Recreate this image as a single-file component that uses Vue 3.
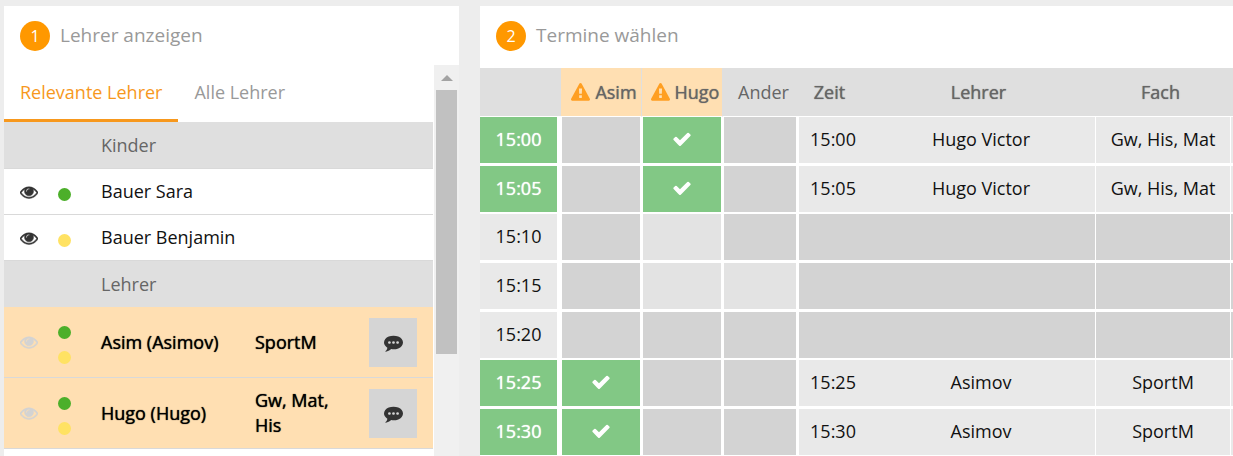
<script setup>
import { ref } from 'vue'

const icons = {
  eye: 'M1664 960q-152-236-381-353 61 104 61 225 0 185-131.5 316.5t-316.5 131.5-316.5-131.5-131.5-316.5q0-121 61-225-229 117-381 353 133 205 333.5 326.5t434.5 121.5 434.5-121.5 333.5-326.5zm-720-384q0-20-14-34t-34-14q-125 0-214.5 89.5t-89.5 214.5q0 20 14 34t34 14 34-14 14-34q0-86 61-147t147-61q20 0 34-14t14-34zm848 384q0 34-20 69-140 230-376.500 368.500t-499.500 138.500-499.500-139-376.500-368q-20-35-20-69t20-69q140-229 376.500-368t499.500-139 499.500 139 376.500 368q20 35 20 69z',
  check: 'M1671 566q0 40-28 68l-724 724-136 136q-28 28-68 28t-68-28l-136-136-362-362q-28-28-28-68t28-68l136-136q28-28 68-28t68 28l294 295 656-657q28-28 68-28t68 28l136 136q28 28 28 68z',
  warning: 'M1024 1375v-190q0-14-9.500-23.500t-22.500-9.500h-192q-13 0-22.500 9.500t-9.500 23.500v190q0 14 9.500 23.500t22.500 9.500h192q13 0 22.500-9.500t9.500-23.500zm-2-374l18-459q0-12-10-19-13-11-24-11h-220q-11 0-24 11-10 7-10 21l17 457q0 10 10 16.500t24 6.500h185q14 0 23.500-6.500t10.500-16.500zm-14-934l768 1408q35 63-2 126-17 29-46.500 46t-63.500 17h-1536q-34 0-63.500-17t-46.500-46q-37-63-2-126l768-1408q17-31 47-49t65-18 65 18 47 49z',
  comment: 'M640 896q0-53-37.500-90.500t-90.500-37.500-90.500 37.500-37.500 90.500 37.500 90.500 90.500 37.500 90.500-37.500 37.500-90.500zm384 0q0-53-37.500-90.500t-90.500-37.500-90.500 37.500-37.500 90.500 37.500 90.500 90.500 37.500 90.500-37.500 37.500-90.500zm384 0q0-53-37.500-90.500t-90.500-37.500-90.500 37.500-37.500 90.500 37.500 90.500 90.500 37.500 90.500-37.500 37.500-90.500zm384 0q0 174-120 321.500t-326 233-450 85.500q-110 0-211-18-173 173-435 229-52 10-86 13-12 1-22-6t-13-18q-4-15 20-37 5-5 23.500-21.500t25.500-23.500 23.500-25.500 24-31.500 20.500-37 20-48 14.500-57.500 12.500-72.500q-146-90-229.500-216.500t-83.500-269.500q0-174 120-321.500t326-233 450-85.500 450 85.500 326 233 120 321.500z'
}

const tabs = ['Relevante Lehrer', 'Alle Lehrer']
const activeTab = ref(0)

const children = [
  { name: 'Bauer Sara', color: 'green' },
  { name: 'Bauer Benjamin', color: 'yellow' }
]
const teachers = [
  { name: 'Asim (Asimov)', subjects: 'SportM' },
  { name: 'Hugo (Hugo)', subjects: 'Gw, Mat, His' }
]

// slots: one state per teacher column
const rows = [
  { time: '15:00', slots: ['busy', 'booked', 'busy'], teacher: 'Hugo Victor', subject: 'Gw, His, Mat' },
  { time: '15:05', slots: ['busy', 'booked', 'busy'], teacher: 'Hugo Victor', subject: 'Gw, His, Mat' },
  { time: '15:10', slots: ['busy', 'free', 'busy'] },
  { time: '15:15', slots: ['busy', 'free', 'free'] },
  { time: '15:20', slots: ['busy', 'busy', 'busy'] },
  { time: '15:25', slots: ['booked', 'busy', 'busy'], teacher: 'Asimov', subject: 'SportM' },
  { time: '15:30', slots: ['booked', 'busy', 'busy'], teacher: 'Asimov', subject: 'SportM' }
]
</script>

<template>
  <main class="page">
    <section class="panel teachers">
      <header class="panel-head">
        <span class="step">1</span>
        <h2>Lehrer anzeigen</h2>
      </header>
      <div class="scroller">
        <div class="list">
          <nav class="tabs">
            <button
              v-for="(tab, i) in tabs"
              :key="tab"
              type="button"
              class="tab"
              :class="{ active: i === activeTab }"
              @click="activeTab = i"
            >{{ tab }}</button>
          </nav>
          <h3 class="group lined-group">Kinder</h3>
          <div v-for="child in children" :key="child.name" class="row">
            <button type="button" class="eye" aria-label="Anzeigen">
              <svg viewBox="0 0 1792 1792"><path :d="icons.eye" /></svg>
            </button>
            <span class="dots child-dot"><i class="dot" :class="child.color"></i></span>
            <span class="name">{{ child.name }}</span>
          </div>
          <h3 class="group">Lehrer</h3>
          <div v-for="t in teachers" :key="t.name" class="row teacher">
            <button type="button" class="eye" aria-label="Anzeigen">
              <svg viewBox="0 0 1792 1792"><path :d="icons.eye" /></svg>
            </button>
            <span class="dots"><i class="dot green"></i><i class="dot yellow"></i></span>
            <span class="name">{{ t.name }}</span>
            <span class="subjects">{{ t.subjects }}</span>
            <button type="button" class="comment" aria-label="Kommentar">
              <svg viewBox="0 0 1792 1792"><path :d="icons.comment" /></svg>
            </button>
          </div>
        </div>
        <div class="scrollbar">
          <svg class="arrow" viewBox="0 0 12 6"><path d="M0 6L6 0L12 6Z" /></svg>
          <div class="thumb"></div>
        </div>
      </div>
    </section>

    <section class="panel dates">
      <header class="panel-head">
        <span class="step">2</span>
        <h2>Termine wählen</h2>
      </header>
      <table>
        <colgroup>
          <col class="c-slot"><col class="c-slot"><col class="c-slot"><col class="c-last">
          <col class="c-time"><col><col class="c-subject"><col class="c-more">
        </colgroup>
        <thead>
          <tr>
            <th></th>
            <th v-for="n in ['Asim', 'Hugo']" :key="n" class="warn">
              <svg viewBox="0 0 1792 1792"><path :d="icons.warning" /></svg><span>{{ n }}</span>
            </th>
            <th class="plain">Ander</th>
            <th class="info-head">Zeit</th>
            <th class="info-head">Lehrer</th>
            <th class="info-head">Fach</th>
            <th></th>
          </tr>
        </thead>
        <tbody>
          <tr v-for="r in rows" :key="r.time">
            <td class="time" :class="{ booked: r.teacher }">{{ r.time }}</td>
            <td v-for="(s, i) in r.slots" :key="i" class="slot" :class="s">
              <svg v-if="s === 'booked'" viewBox="0 0 1792 1792"><path :d="icons.check" /></svg>
            </td>
            <td class="info first" :class="{ busy: !r.teacher }">{{ r.teacher ? r.time : '' }}</td>
            <td class="info lined" :class="{ busy: !r.teacher }">{{ r.teacher }}</td>
            <td class="info lined" :class="{ busy: !r.teacher }">{{ r.subject }}</td>
            <td class="info" :class="{ busy: !r.teacher }"></td>
          </tr>
        </tbody>
      </table>
    </section>
  </main>
</template>

<style>
body {
  background: #ededed;
}
</style>

<style scoped>
.page {
  display: flex;
  gap: 21px;
  height: 100vh;
  box-sizing: border-box;
  padding: 6px 0 0 4px;
  overflow: hidden;
  font: 18px/25px "Open Sans", "Noto Sans", sans-serif;
  color: #111;
}
.panel {
  display: flex;
  flex-direction: column;
  background: #fff;
}
.teachers {
  flex: 0 0 455px;
}
.dates {
  flex: 1;
  min-width: 0;
}
.panel-head {
  display: flex;
  align-items: center;
  gap: 10px;
  flex: none;
  height: 59px;
  padding: 0 16px;
  box-sizing: border-box;
}
.dates .panel-head {
  height: 62px;
  padding-bottom: 3px;
}
.step {
  width: 30px;
  height: 30px;
  border-radius: 50%;
  background: #ff9800;
  color: #fff;
  font-size: 16px;
  line-height: 30px;
  text-align: center;
}
h2 {
  margin: 0;
  font-size: 19px;
  font-weight: 400;
  color: #999;
}
.scroller {
  flex: 1;
  display: flex;
  min-height: 0;
}
.list {
  flex: 1;
  margin-right: 1px;
}
.tabs {
  display: flex;
}
button {
  border: 0;
  padding: 0;
  background: none;
  font: inherit;
  cursor: pointer;
}
svg {
  display: block;
  fill: currentColor;
}
.tab {
  height: 57px;
  padding: 0 16px;
  border-bottom: 3px solid transparent;
  color: #999;
}
.tab.active {
  color: #f7981d;
  border-color: #f7981d;
}
.group {
  margin: 0;
  padding-left: 97px;
  font-size: 18px;
  font-weight: 400;
  line-height: 46px;
  color: #666;
  background: #dfdfdf;
}
.lined-group {
  border-bottom: 1px solid #d9d9d9;
}
.row {
  display: flex;
  align-items: center;
  height: 45px;
  border-bottom: 1px solid #d9d9d9;
}
.eye {
  margin-left: 16px;
  color: #333;
}
.eye svg {
  width: 18px;
  height: 18px;
  stroke: currentColor;
  stroke-width: 50;
}
.dots {
  display: flex;
  flex-direction: column;
  gap: 12px;
  width: 43px;
  margin-left: 20px;
}
.child-dot {
  padding-top: 5px;
}
.dot {
  width: 13px;
  height: 13px;
  border-radius: 50%;
}
.green {
  background: #4caf2a;
}
.yellow {
  background: #ffe263;
}
.teacher {
  height: 70px;
  background: #ffdfb2;
  color: #000;
  text-shadow: 0 0 1px currentColor;
}
.teacher .dots {
  padding-top: 6px;
}
.teacher .eye {
  color: #d3d3d3;
}
.teacher .name {
  width: 154px;
}
.subjects {
  width: 90px;
}
.comment {
  display: flex;
  align-items: center;
  justify-content: center;
  width: 48px;
  height: 49px;
  margin: 0 16px 0 auto;
  background: #d5d5d5;
  color: #333;
}
.comment svg {
  width: 19px;
  height: 19px;
}
.scrollbar {
  width: 25px;
  background: #f0f0f0;
}
.arrow {
  width: 12px;
  height: 6px;
  margin: 10px auto 9px 7px;
  color: #a3a3a3;
}
.thumb {
  width: 21px;
  height: 264px;
  margin-left: 2px;
  background: #c1c1c1;
}
table {
  width: 100%;
  table-layout: fixed;
  border-collapse: separate;
  border-spacing: 0;
  text-align: center;
}
.c-slot {
  width: 81px;
}
.c-last {
  width: 75px;
}
.c-time {
  width: 69px;
}
.c-subject {
  width: 135px;
}
.c-more {
  width: 2px;
}
th {
  height: 48px;
  padding: 0;
  background: #dfdfdf;
  border-bottom: 1px solid #fff;
  color: #666;
  font-weight: 400;
  text-shadow: 0 0 1px currentColor;
  white-space: nowrap;
}
th.plain {
  padding-left: 6px;
  text-shadow: none;
}
th.info-head {
  padding-right: 6px;
}
th.warn {
  padding-left: 6px;
  background: #ffdfb2;
  border-right: 1px solid #dfdfdf;
}
th.warn svg {
  display: inline-block;
  width: 19px;
  height: 19px;
  margin-right: 5px;
  vertical-align: -3px;
  color: #ff9f22;
}
td {
  height: 44px;
  padding: 0 0 2px;
  border: 0 solid #fff;
  border-bottom-width: 3px;
  background: #e9e9e9;
}
tr:nth-child(3n + 2) td {
  border-bottom-width: 2px;
}
.time {
  border-right-width: 4px;
}
.slot {
  border-left-width: 1px;
  border-right-width: 2px;
}
.slot svg {
  width: 20px;
  height: 20px;
  margin: 0 auto;
}
.first {
  border-left-width: 1px;
}
.lined {
  border-right-width: 1px;
}
.free {
  background: #e3e3e3;
}
.busy {
  background: #d3d3d3;
}
.booked {
  background: #82c885;
  color: #fff;
  text-shadow: 0 0 1px currentColor;
}
</style>
